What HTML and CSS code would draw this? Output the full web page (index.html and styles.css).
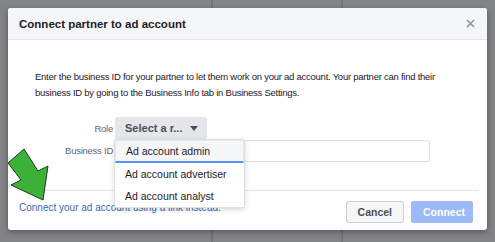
FILE: index.html
```html
<!DOCTYPE html>
<html lang="en">
<head>
  <meta charset="UTF-8">
  <title>Connect partner to ad account</title>
  <link rel="stylesheet" href="styles.css">
</head>
<body>
  <div class="dialog">
    <div class="dialog-header">
      <h2>Connect partner to ad account</h2>
      <svg class="close" width="9" height="9" viewBox="0 0 9 9"><path d="M1 1L8 8M8 1L1 8" stroke="#90949c" stroke-width="1.6"/></svg>
    </div>

    <div class="dialog-body">
      <p class="intro">Enter the business ID for your partner to let them work on your ad account. Your partner can find their business ID by going to the Business Info tab in Business Settings.</p>

      <div class="row">
        <label>Role</label>
        <div class="picker">
          <button type="button" class="select-btn">Select a r... <span class="caret"></span></button>
          <ul class="menu">
            <li class="active">Ad account admin</li>
            <li>Ad account advertiser</li>
            <li>Ad account analyst</li>
          </ul>
        </div>
      </div>

      <div class="row">
        <label>Business ID</label>
        <input type="text" class="biz-input">
      </div>
    </div>

    <div class="dialog-footer">
      <a href="#" class="link">Connect your ad account using a link instead.</a>
      <div class="actions">
        <button type="button" class="btn">Cancel</button>
        <button type="button" class="btn btn-primary">Connect</button>
      </div>
    </div>

    <svg class="arrow" width="60" height="70" viewBox="0 0 60 70">
      <polygon points="8,23 24,9 38,31 48,26 43,60 11,45 21,40" fill="#3cb13a" stroke="#1f3a1e" stroke-width="1"/>
    </svg>
  </div>
</body>
</html>
```

FILE: styles.css
```css
body { margin: 0; height: 242px; font-family: "Liberation Sans", Arial, sans-serif; background: #838486; background-image: linear-gradient(90deg, transparent 211px, #727375 211px, #727375 213px, transparent 213px, transparent 341px, #727375 341px, #727375 343px, transparent 343px); padding: 8px; box-sizing: border-box; overflow: hidden; }

.dialog { position: relative; width: 479px; height: 222px; background: #fff; border-radius: 3px; box-shadow: 0 2px 6px rgba(0,0,0,0.35); display: flex; flex-direction: column; }

.dialog-header { height: 31px; background: #f5f6f7; border-bottom: 1px solid #e5e5e5; border-radius: 3px 3px 0 0; display: flex; align-items: center; justify-content: space-between; padding: 0 11px; }
.dialog-header h2 { margin: 0; font-size: 11.5px; font-weight: bold; color: #1d2129; }
.close { margin-right: 1px; }

.dialog-body { padding: 29px 27px 0; flex: 1; }
.intro { margin: 0 0 16px; font-size: 9.5px; letter-spacing: -0.25px; line-height: 16px; color: #1d2129; }

.row { display: flex; align-items: center; }
.row label { width: 78px; padding-right: 2px; text-align: right; font-size: 9.5px; letter-spacing: -0.25px; color: #606770; }

.picker { position: relative; }
.select-btn { height: 22px; width: 92px; padding: 0 0 0 10px; border: none; border-radius: 2px; background: #e4e6ea; font-family: inherit; font-size: 11px; font-weight: bold; color: #4b4f56; text-align: left; display: flex; align-items: center; }
.caret { margin-left: 8px; border-left: 4px solid transparent; border-right: 4px solid transparent; border-top: 5px solid #4b4f56; }

.menu { position: absolute; top: 22px; left: -1px; z-index: 2; width: 129px; margin: 0; padding: 0; list-style: none; background: #fff; border: 1px solid #dddfe2; border-radius: 2px; box-shadow: 0 2px 5px rgba(0,0,0,0.15); }
.menu li { height: 22px; line-height: 22px; padding-left: 10px; font-size: 10.5px; color: #1d2129; }
.menu li.active { height: 20px; line-height: 20px; background: #f5f6f7; border: 1px solid #e3e6ea; border-bottom: 2px solid #5b93f5; }

.biz-input { width: 315px; height: 22px; box-sizing: border-box; border: 1px solid #dddfe2; border-radius: 2px; margin: 1px 0 0; }

.dialog-footer { margin: 0 8px 0 11px; border-top: 1px solid #e5e5e5; height: 39px; display: flex; justify-content: space-between; }
.link { margin-top: 11px; font-size: 10px; color: #4267b2; text-decoration: none; }
.actions { display: flex; gap: 7px; margin-top: 10px; }
.btn { height: 22px; padding: 0 11px; border: 1px solid #ccd0d5; border-radius: 2px; background: #f5f6f7; font-family: inherit; font-size: 10.5px; font-weight: bold; color: #4b4f56; }
.btn-primary { width: 62px; background: #9cb9f8; border-color: #9cb9f8; color: #fff; margin-right: 6px; }

.arrow { position: absolute; left: -8px; top: 132px; z-index: 3; }
```
